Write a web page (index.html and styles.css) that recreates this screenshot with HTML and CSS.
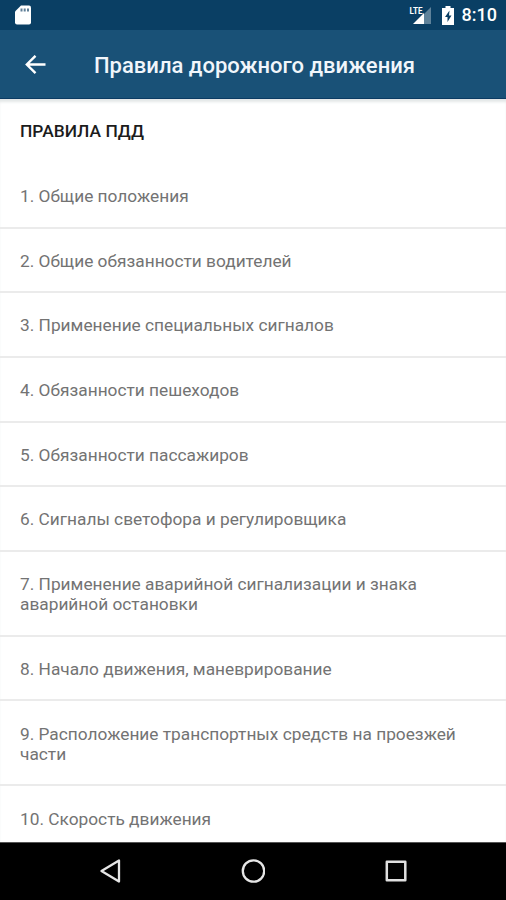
FILE: index.html
```html
<!DOCTYPE html>
<html lang="ru">
<head>
<meta charset="utf-8">
<title>Правила дорожного движения</title>
<link rel="stylesheet" href="styles.css">
</head>
<body>
<div class="screen">
  <div class="status">
    <svg class="sd" width="16" height="20" viewBox="0 0 16 20"><path d="M6 0.500h8a2 2 0 0 1 2 2v15a2 2 0 0 1-2 2H2a2 2 0 0 1-2-2V6.500z" fill="#fff"/><path d="M5.500 3.500h2v3h-2zM8.700 3.500h2v3h-2zM12 3.500h2v3h-2z" fill="#5f7f97"/></svg>
    <div class="status-right">
      <svg width="23" height="20" viewBox="0 0 23 20"><path d="M22 2v17h-7V9z" fill="#fff" fill-opacity=".35"/><path d="M15 8v11H4z" fill="#fff"/><text x="0.500" y="8.500" class="lte" textLength="13" lengthAdjust="spacingAndGlyphs">LTE</text></svg>
      <svg class="battery" width="12" height="19" viewBox="0 0 12 19"><path d="M3.500 0h5v2H12v17H0V2h3.500z" fill="#fff"/><path d="M7.500 4.500L3 11h2.500v5L9.500 9.500H7z" fill="#0a3f64"/></svg>
      <span class="time">8:10</span>
    </div>
  </div>
  <header class="bar">
    <svg class="back" width="22" height="20" viewBox="0 0 22 20"><path d="M20.500 9.500H2M10.500 .8L1.800 9.500l8.700 8.700" fill="none" stroke="#fff" stroke-width="2.400"/></svg>
    <h1>Правила дорожного движения</h1>
  </header>
  <main>
    <h2>ПРАВИЛА ПДД</h2>
    <ul>
      <li>1. Общие положения</li>
      <li>2. Общие обязанности водителей</li>
      <li>3. Применение специальных сигналов</li>
      <li>4. Обязанности пешеходов</li>
      <li>5. Обязанности пассажиров</li>
      <li>6. Сигналы светофора и регулировщика</li>
      <li>7. Применение аварийной сигнализации и знака<br>аварийной остановки</li>
      <li>8. Начало движения, маневрирование</li>
      <li>9. Расположение транспортных средств на проезжей<br>части</li>
      <li>10. Скорость движения</li>
    </ul>
  </main>
  <nav>
    <svg width="22" height="24" viewBox="0 0 22 24"><path d="M20 1.500v21L2.500 12z" fill="none" stroke="#e6e6e6" stroke-width="2.300" stroke-linejoin="round"/></svg>
    <svg width="24" height="24" viewBox="0 0 24 24"><circle cx="12.500" cy="12" r="10.700" fill="none" stroke="#e6e6e6" stroke-width="2.300"/></svg>
    <svg width="22" height="24" viewBox="0 0 22 24"><path d="M1.800 2.700h18.500v18.500H1.800z" fill="none" stroke="#e0e0e0" stroke-width="2.500" stroke-linejoin="round"/></svg>
  </nav>
</div>
</body>
</html>
```
FILE: styles.css
```css
* { box-sizing: border-box; }
body { margin: 0; font-family: Roboto, sans-serif; }
.screen { width: 506px; height: 900px; display: flex; flex-direction: column; overflow: hidden; background: #fff; }
.status { height: 30px; flex: none; display: flex; align-items: center; justify-content: space-between; padding: 0 9px 0 15px; background: #0a3f64; }
.status-right { display: flex; align-items: center; }
.battery { margin-left: 10px; }
.time { margin-left: 8px; color: #fff; font-size: 18px; font-weight: 500; line-height: 30px; }
.lte { font: 700 9.500px Roboto, sans-serif; fill: #fff; }
.bar { height: 69px; flex: none; display: flex; align-items: center; padding-left: 25px; background: #195177; border-bottom: 1px solid #0b3b63; }
.back { margin-top: 2px; }
.bar h1 { margin: 4px 0 0 47px; font-size: 22px; font-weight: 500; line-height: 30px; color: #f1f6fb; white-space: nowrap; }
main { flex: 1; min-height: 0; overflow: hidden; box-shadow: inset 0 4px 3px -1px #e3e7e7; }
h2 { margin: 0; padding: 22px 20px 0; height: 65px; font-size: 17.400px; font-weight: 500; line-height: 21px; color: #1c1c1c; }
ul { margin: 0; padding: 0; list-style: none; }
li { padding: 22.200px 20px 20.100px; border-bottom: 2px solid #ebebeb; font-size: 17.300px; line-height: 20.350px; color: #737373; white-space: nowrap; }
nav { height: 58px; flex: none; display: flex; align-items: center; justify-content: space-between; padding: 0 99px 1px; background: #000; border-top: 1px solid #555; }
```
